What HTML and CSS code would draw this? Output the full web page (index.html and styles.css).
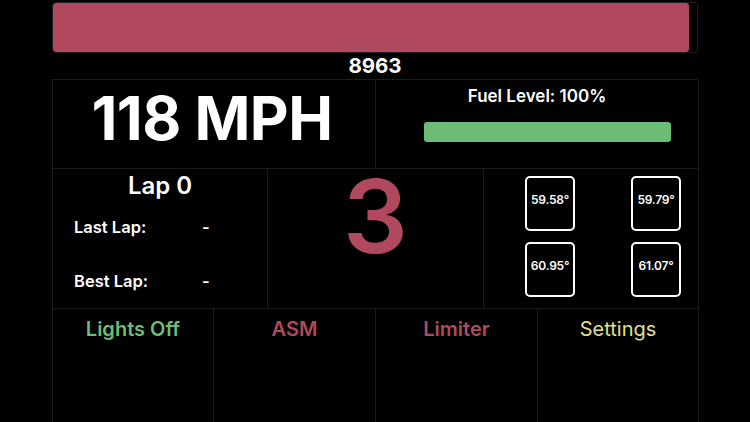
FILE: index.html
```html
<!DOCTYPE html>
<html>
<head>
<meta charset="utf-8">
<link rel="stylesheet" href="styles.css">
</head>
<body>
<div class="dash">
  <div class="rpm-track"><div class="rpm-fill" style="width:98.8%"></div></div>
  <div class="rpm-value">8963</div>
  <div class="row row1">
    <div class="cell speed">118 MPH</div>
    <div class="cell fuel">
      <div class="fuel-label">Fuel Level: 100%</div>
      <div class="fuel-bar"></div>
    </div>
  </div>
  <div class="row row2">
    <div class="cell lap">
      <div class="lap-title">Lap 0</div>
      <div class="lap-line"><span class="lap-key">Last Lap:</span><span class="lap-val">-</span></div>
      <div class="lap-line best"><span class="lap-key">Best Lap:</span><span class="lap-val">-</span></div>
    </div>
    <div class="cell gear">3</div>
    <div class="cell tires">
      <div class="tire">59.58°</div>
      <div class="tire">59.79°</div>
      <div class="tire">60.95°</div>
      <div class="tire">61.07°</div>
    </div>
  </div>
  <div class="row row3">
    <div class="cell btn green">Lights Off</div>
    <div class="cell btn red">ASM</div>
    <div class="cell btn red">Limiter</div>
    <div class="cell btn yellow">Settings</div>
  </div>
</div>
</body>
</html>
```
FILE: styles.css
```css
html, body {
  margin: 0;
  padding: 0;
  background: #000;
  color: #fff;
  font-family: Inter, "Noto Sans", "Liberation Sans", sans-serif;
  overflow: hidden;
}
.dash {
  width: 646px;
  margin: 0 0 0 52px;
  padding-top: 2px;
}
.rpm-track {
  height: 49px;
  border: 1px solid #1f1f1f;
  border-radius: 4px;
  overflow: hidden;
}
.rpm-fill {
  height: 100%;
  background: #b0495e;
  border-radius: 3px;
}
.rpm-value {
  height: 26px;
  line-height: 26px;
  text-align: center;
  font-size: 20.5px;
  font-weight: 700;
}
.row {
  display: grid;
  border-left: 1px solid #1c1c1c;
  border-top: 1px solid #1c1c1c;
}
.cell {
  border-right: 1px solid #1c1c1c;
  border-bottom: 1px solid #1c1c1c;
  box-sizing: border-box;
}
.row1 {
  grid-template-columns: 323px 323px;
  height: 89px;
}
.speed {
  display: flex;
  align-items: center;
  justify-content: center;
  font-size: 60px;
  font-weight: 700;
  letter-spacing: -0.5px;
  padding-bottom: 12px;
  padding-right: 4px;
}
.fuel {
  display: flex;
  flex-direction: column;
  align-items: center;
  padding-top: 5px;
}
.fuel-label {
  font-size: 17px;
  font-weight: 600;
  line-height: 22px;
}
.fuel-bar {
  width: 247px;
  height: 20px;
  margin-top: 15px;
  margin-left: 20px;
  background: #6bbd75;
  border-radius: 3px;
}
.row2 {
  grid-template-columns: 215px 216px 215px;
  height: 140px;
  border-top: none;
}
.lap {
  padding: 2px 0 0 21px;
}
.lap-title {
  text-align: center;
  margin-left: -21px;
  font-size: 24px;
  font-weight: 600;
  line-height: 30px;
}
.lap-line {
  display: flex;
  font-size: 16.5px;
  font-weight: 600;
  margin-top: 16px;
  line-height: 20px;
}
.lap-line.best {
  margin-top: 34px;
}
.lap-key {
  width: 128px;
}
.gear {
  display: flex;
  justify-content: center;
  align-items: flex-start;
  color: #b0495e;
  font-size: 102px;
  font-weight: 600;
  line-height: 94px;
}
.tires {
  display: grid;
  grid-template-columns: 50px 50px;
  grid-template-rows: 55px 55px;
  column-gap: 56px;
  row-gap: 11px;
  padding: 7px 0 0 41px;
}
.tire {
  border: 2px solid #fff;
  border-radius: 5px;
  display: flex;
  align-items: center;
  justify-content: center;
  font-size: 12px;
  font-weight: 600;
  padding-bottom: 8px;
  box-sizing: border-box;
  letter-spacing: -0.2px;
}
.row3 {
  grid-template-columns: 161px 162px 162px 161px;
  height: 130px;
  border-top: none;
}
.btn {
  text-align: center;
  font-size: 20px;
  font-weight: 600;
  line-height: 24px;
  padding-top: 8px;
}
.green { color: #6bbd75; }
.red { color: #b0495e; }
.yellow { color: #e0e08c; font-weight: 400; }
```
